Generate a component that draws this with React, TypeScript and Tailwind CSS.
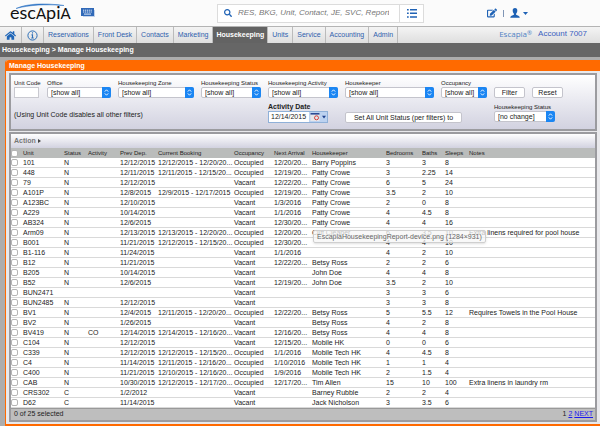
import type { ReactNode } from "react";
import clsx from "clsx";
import { FaEdit, FaHome, FaSearch } from "react-icons/fa";

type Row = {
  unit: string;
  status?: string;
  activity?: string;
  prev?: string;
  booking?: string;
  occupancy: string;
  next?: string;
  keeper?: string;
  beds: string;
  baths: string;
  sleeps: string;
  notes?: string;
};

const tabs = [
  "Reservations",
  "Front Desk",
  "Contacts",
  "Marketing",
  "Housekeeping",
  "Units",
  "Service",
  "Accounting",
  "Admin",
];

const columns = [
  { label: "Unit", width: "w-[41px]" },
  { label: "Status", width: "w-[24px]" },
  { label: "Activity", width: "w-[32px]" },
  { label: "Prev Dep.", width: "w-[38px]" },
  { label: "Current Booking", width: "w-[76px]" },
  { label: "Occupancy", width: "w-[40px]" },
  { label: "Next Arrival", width: "w-[38px]" },
  { label: "Housekeeper", width: "w-[74px]" },
  { label: "Bedrooms", width: "w-[36px]" },
  { label: "Baths", width: "w-[23px]" },
  { label: "Sleeps", width: "w-[24px]" },
  { label: "Notes", width: "" },
];

const rows: Row[] = [
  { unit: "101", status: "N", prev: "12/12/2015", booking: "12/12/2015 - 12/20/20...", occupancy: "Occupied", next: "12/20/20...", keeper: "Barry Poppins", beds: "3", baths: "3", sleeps: "8" },
  { unit: "448", status: "N", prev: "12/11/2015", booking: "12/11/2015 - 12/15/20...", occupancy: "Occupied", next: "12/19/20...", keeper: "Patty Crowe", beds: "3", baths: "2.25", sleeps: "14" },
  { unit: "79", status: "N", prev: "12/12/2015", occupancy: "Vacant", next: "12/22/20...", keeper: "Patty Crowe", beds: "6", baths: "5", sleeps: "24" },
  { unit: "A101P", status: "N", prev: "12/8/2015", booking: "12/9/2015 - 12/17/2015", occupancy: "Occupied", next: "12/19/20...", keeper: "Patty Crowe", beds: "3.5", baths: "2", sleeps: "10" },
  { unit: "A123BC", status: "N", prev: "12/10/2015", occupancy: "Vacant", next: "1/3/2016", keeper: "Patty Crowe", beds: "2", baths: "0", sleeps: "8" },
  { unit: "A229", status: "N", prev: "10/14/2015", occupancy: "Vacant", next: "1/1/2016", keeper: "Patty Crowe", beds: "4", baths: "4.5", sleeps: "8" },
  { unit: "AB324", status: "N", prev: "12/6/2015", occupancy: "Vacant", next: "12/30/20...", keeper: "Patty Crowe", beds: "4", baths: "4", sleeps: "16" },
  { unit: "Arm09", status: "N", prev: "12/13/2015", booking: "12/13/2015 - 12/20/20...", occupancy: "Occupied", next: "12/20/20...", keeper: "Cliff Cleaner", beds: "6", baths: "3.5", sleeps: "10", notes: "Extra linens required for pool house" },
  { unit: "B001", status: "N", prev: "11/21/2015", booking: "12/12/2015 - 12/15/20...", occupancy: "Occupied", next: "12/30/20...", beds: "4", baths: "4", sleeps: "10" },
  { unit: "B1-116", status: "N", prev: "11/24/2015", occupancy: "Vacant", next: "1/1/2016", beds: "4", baths: "2", sleeps: "10" },
  { unit: "B12", status: "N", prev: "11/21/2015", occupancy: "Vacant", next: "12/22/20...", keeper: "Betsy Ross", beds: "2", baths: "2", sleeps: "6" },
  { unit: "B205", status: "N", prev: "10/14/2015", occupancy: "Vacant", keeper: "John Doe", beds: "4", baths: "4", sleeps: "8" },
  { unit: "B52", status: "N", prev: "12/6/2015", occupancy: "Vacant", next: "12/19/20...", keeper: "John Doe", beds: "3.5", baths: "2", sleeps: "10" },
  { unit: "BUN2471", occupancy: "Vacant", beds: "3", baths: "3", sleeps: "6" },
  { unit: "BUN2485", status: "N", prev: "12/12/2015", occupancy: "Vacant", beds: "3", baths: "3", sleeps: "8" },
  { unit: "BV1", status: "N", prev: "12/4/2015", booking: "12/11/2015 - 12/20/20...", occupancy: "Occupied", next: "12/22/20...", keeper: "Betsy Ross", beds: "5", baths: "5.5", sleeps: "12", notes: "Requires Towels in the Pool House" },
  { unit: "BV2", status: "N", prev: "1/26/2015", occupancy: "Vacant", keeper: "Betsy Ross", beds: "4", baths: "2", sleeps: "8" },
  { unit: "BV419", status: "N", activity: "CO", prev: "12/14/2015", booking: "12/14/2015 - 12/16/20...", occupancy: "Vacant", next: "12/16/20...", keeper: "Betsy Ross", beds: "4", baths: "4", sleeps: "8" },
  { unit: "C104", status: "N", prev: "12/12/2015", occupancy: "Vacant", next: "12/15/20...", keeper: "Mobile HK", beds: "0", baths: "0", sleeps: "6" },
  { unit: "C339", status: "N", prev: "12/12/2015", booking: "12/12/2015 - 12/15/20...", occupancy: "Occupied", next: "1/1/2016", keeper: "Mobile Tech HK", beds: "4", baths: "4.5", sleeps: "8" },
  { unit: "C4", status: "N", prev: "11/14/2015", booking: "12/11/2015 - 12/16/20...", occupancy: "Occupied", next: "1/10/2016", keeper: "Mobile Tech HK", beds: "1", baths: "1", sleeps: "4" },
  { unit: "C400", status: "N", prev: "11/21/2015", booking: "12/10/2015 - 12/16/20...", occupancy: "Occupied", next: "1/9/2016", keeper: "Mobile Tech HK", beds: "2", baths: "1.5", sleeps: "4" },
  { unit: "CAB", status: "N", prev: "10/30/2015", booking: "12/12/2015 - 12/17/20...", occupancy: "Occupied", next: "12/17/20...", keeper: "Tim Allen", beds: "15", baths: "10", sleeps: "100", notes: "Extra linens in laundry rm" },
  { unit: "CRS302", status: "C", prev: "1/2/2012", occupancy: "Vacant", keeper: "Barney Rubble", beds: "2", baths: "2", sleeps: "4" },
  { unit: "D62", status: "C", prev: "11/14/2015", occupancy: "Vacant", keeper: "Jack Nicholson", beds: "3", baths: "3.5", sleeps: "6" },
];

function Logo() {
  return (
    <a href="#" className="relative flex h-[22px] w-[60px] items-baseline font-['Lato',sans-serif] text-[18px] leading-[20px] text-[#111]">
      esc<span className="text-[15px]">A</span>pi<span className="text-[15px]">A</span>
      <svg viewBox="0 0 60 22" className="pointer-events-none absolute inset-0 h-full w-full" aria-hidden>
        <path d="M6 6.5C16 2 32 .5 54 3.5C34 2 20 3 6 6.5Z" fill="#2f74c5" stroke="#2f74c5" strokeWidth=".5" />
      </svg>
    </a>
  );
}

function KeyboardIcon() {
  return (
    <svg viewBox="0 0 15 10" className="h-[10px] w-[15px]" aria-hidden>
      <path d="M2 2h12v7H2z" fill="#c3d3ea" />
      <path d="M0 0h13v8H0z" fill="#3069b8" />
      <path d="M2 2.2h9M2 4h9" stroke="#dfe9f6" strokeWidth="1" strokeDasharray="1.2 .7" />
      <path d="M3 6.1h7" stroke="#dfe9f6" strokeWidth="1" />
    </svg>
  );
}

function InfoIcon() {
  return (
    <svg viewBox="0 0 11 11" className="h-[11px] w-[11px]" fill="none" stroke="#2d6fb8" aria-hidden>
      <circle cx="5.5" cy="5.5" r="4.6" strokeWidth="1" />
      <path d="M5.5 2.3v1.3M4.5 4.9h1v3M4.3 8h2.4" strokeWidth="1.1" />
    </svg>
  );
}

function ListIcon() {
  return (
    <svg viewBox="0 0 10 9" className="h-[9px] w-[10px]" fill="#1f62b5" aria-hidden>
      <path d="M0 0h1.7v1.5H0zM3 0h7v1.5H3zM0 3.6h1.7v1.5H0zM3 3.6h7v1.5H3zM0 7.2h1.7v1.5H0zM3 7.2h7v1.5H3z" />
    </svg>
  );
}

function UserIcon() {
  return (
    <svg viewBox="0 0 10 10" className="h-[10px] w-[10px]" fill="#1f62b5" aria-hidden>
      <path d="M5 0C3.4 0 2.6 1.1 2.7 2.7C2.8 4.2 3.3 5 3.9 5.6V6.8C2.6 7.5 0.3 7.8 0.2 9.7H9.8C9.7 7.8 7.4 7.5 6.1 6.8V5.6C6.7 5 7.2 4.2 7.3 2.7C7.4 1.1 6.6 0 5 0Z" />
    </svg>
  );
}

function Field({ id, label, children, className }: { id: string; label: string; children: ReactNode; className?: string }) {
  return (
    <div className={clsx("flex flex-col", className)}>
      <label htmlFor={id} className="h-[8px] text-[6px] leading-[8px] whitespace-nowrap">
        {label}
      </label>
      {children}
    </div>
  );
}

function Select({ id, value = "[show all]", className }: { id: string; value?: string; className?: string }) {
  return (
    <div className={clsx("relative h-[11px]", className)}>
      <select
        id={id}
        className="block h-full w-full appearance-none rounded-[2px] border border-[#c4c4cc] bg-white pl-[3px] text-[7px] leading-[9px] text-[#222]"
      >
        <option>{value}</option>
      </select>
      <svg viewBox="0 0 9 11" className="pointer-events-none absolute top-0 right-0 h-[11px] w-[9px]" aria-hidden>
        <path d="M0 0h7a2 2 0 0 1 2 2v7a2 2 0 0 1-2 2H0z" fill="#1b86f3" />
        <path d="M2.8 4.6 4.5 2.8l1.7 1.8M2.8 6.4l1.7 1.8 1.7-1.8" fill="none" stroke="#fff" strokeWidth=".9" />
      </svg>
    </div>
  );
}

function Button({ children, className }: { children: ReactNode; className?: string }) {
  return (
    <button
      type="button"
      className={clsx("h-[11px] rounded-[2px] border border-[#c4c4cc] bg-white text-center text-[7px] leading-[9px] text-[#222]", className)}
    >
      {children}
    </button>
  );
}

function Checkbox({ label }: { label: string }) {
  return (
    <input
      type="checkbox"
      aria-label={label}
      className="mx-auto block h-[7px] w-[7px] appearance-none rounded-[2px] border border-[#b5b5b5] bg-white"
    />
  );
}

function TopBar() {
  return (
    <header className="flex h-[26px] items-center bg-[#fbfbfb] pr-[72px] pl-[10px]">
      <Logo />
      <button type="button" aria-label="Keyboard" className="ml-[11px]">
        <KeyboardIcon />
      </button>
      <div className="ml-[121px] flex h-[19px] w-[207px] items-center border border-[#dcdcdc] bg-white">
        <FaSearch className="ml-[6px] h-[8px] w-[8px] shrink-0 text-[#1f62b5]" />
        <input
          type="search"
          aria-label="Search"
          placeholder="RES, BKG, Unit, Contact, JE, SVC, Report"
          className="ml-[6px] min-w-0 flex-1 text-[8px] leading-[10px] italic outline-none placeholder:text-[#777]"
        />
        <button type="button" aria-label="List" className="flex h-full w-[24px] items-center justify-center border-l border-[#dcdcdc]">
          <ListIcon />
        </button>
      </div>
      <div className="ml-auto flex items-center gap-[6px] text-[#1f62b5]">
        <button type="button" aria-label="Edit">
          <FaEdit className="h-[10px] w-[10px]" />
        </button>
        <span className="h-[7px] w-px bg-[#7f95b5]" />
        <button type="button" aria-label="Account menu" className="flex items-center gap-[3px]">
          <UserIcon />
          <svg viewBox="0 0 5 3" className="h-[3px] w-[5px]" fill="#1f62b5" aria-hidden>
            <path d="M0 0h5L2.5 3z" />
          </svg>
        </button>
      </div>
    </header>
  );
}

function NavBar() {
  return (
    <nav className="flex h-[17px] items-stretch border-t border-[#b4b4b4] bg-linear-to-b from-[#f4f4f4] to-[#dedede] text-[7px] text-[#2f5fae]">
      <a href="#" aria-label="Home" className="flex w-[22px] items-center justify-center border-r border-[#bbb]">
        <FaHome className="h-[11px] w-[11px] text-[#1f66b8]" />
      </a>
      <a href="#" aria-label="Info" className="flex w-[22px] items-center justify-center border-r border-[#bbb]">
        <InfoIcon />
      </a>
      {tabs.map((tab) => (
        <a
          key={tab}
          href="#"
          className={clsx(
            "flex items-center border-r border-[#bbb]",
            tab === "Housekeeping" ? "bg-[#636363] px-[3px] font-bold text-white" : "px-1",
          )}
        >
          {tab}
        </a>
      ))}
      <div className="ml-auto flex items-center gap-[6px] pr-[13px] pb-[2px] text-[8px] leading-[10px] text-[#3a5fc0]">
        <span className="flex font-['Open_Sans',sans-serif] text-[#4f82c4]">
          Escapia<span className="text-[6px] leading-[8px]">®</span>
        </span>
        <span>Account 7007</span>
      </div>
    </nav>
  );
}

function Filters() {
  return (
    <form className="grid grid-cols-[26px_64px_76px_60px_70px_89px_46px_31px_31px] gap-x-[7px] gap-y-[5px] border-2 border-[#9b9b9f] bg-linear-to-b from-white to-[#d2d2e0] px-[3px] pt-[4px] pb-[6px]">
      <Field id="unit-code" label="Unit Code">
        <input id="unit-code" type="text" className="h-[11px] w-[25px] border border-[#c9c9d0] bg-white px-[2px] text-[7px]" />
      </Field>
      <Field id="office" label="Office">
        <Select id="office" />
      </Field>
      <Field id="zone" label="Housekeeping Zone">
        <Select id="zone" />
      </Field>
      <Field id="hk-status" label="Housekeeping Status">
        <Select id="hk-status" />
      </Field>
      <Field id="hk-activity" label="Housekeeping Activity">
        <Select id="hk-activity" />
      </Field>
      <Field id="keeper" label="Housekeeper">
        <Select id="keeper" />
      </Field>
      <Field id="occupancy" label="Occupancy">
        <Select id="occupancy" />
      </Field>
      <Button className="self-end">Filter</Button>
      <Button className="self-end">Reset</Button>

      <p className="col-span-4 self-center pt-[3px] text-[7px] leading-[10px]">(Using Unit Code disables all other filters)</p>
      <div className="flex flex-col">
        <label htmlFor="activity-date" className="h-[8px] text-[7px] leading-[8px] font-bold whitespace-nowrap">
          Activity Date
        </label>
        <div className="flex h-[12px] w-[60px] border border-[#8fb0d8] bg-[#bcd2f0]">
          <input id="activity-date" type="text" defaultValue="12/14/2015" className="w-[40px] bg-white pl-[2px] text-[7px] leading-[10px]" />
          <button type="button" aria-label="Pick a date" className="flex flex-1 items-center justify-center">
            <svg viewBox="0 0 18 10" className="h-[10px] w-[18px]" aria-hidden>
              <path d="M1.5 1h9v8h-9z" fill="#e6e6ea" />
              <path d="M1.5 1h9v1.6h-9z" fill="#2c4a94" />
              <circle cx="7.5" cy="5.8" r="2" fill="none" stroke="#d2403c" strokeWidth="1" />
              <path d="M13 3.8h4L15 6.6z" fill="#1c3f8c" />
            </svg>
          </button>
        </div>
      </div>
      <Button className="col-span-2 w-[117px] self-end">Set All Unit Status (per filters) to</Button>
      <Field id="set-status" label="Housekeeping Status" className="col-span-2">
        <Select id="set-status" value="[no change]" className="w-[61px]" />
      </Field>
    </form>
  );
}

function UnitTable() {
  return (
    <table className="w-full table-fixed border-separate border-spacing-0 text-left">
      <thead className="bg-[#babcbb] text-[6px] leading-[9px] text-[#222]">
        <tr>
          <th className="h-[10px] w-[12px] p-0">
            <div className="w-[7px]">
              <Checkbox label="Select all units" />
            </div>
          </th>
          {columns.map((col) => (
            <th key={col.label} className={clsx("h-[10px] p-0 font-normal whitespace-nowrap", col.width)}>
              {col.label}
            </th>
          ))}
        </tr>
      </thead>
      <tbody className="bg-white text-[7px] leading-[9px] whitespace-nowrap text-[#222] [&_td]:h-[10px] [&_td]:border-b [&_td]:border-[#d9d9d9] [&_td]:p-0">
        {rows.map((row) => (
          <tr key={row.unit}>
            <td>
              <div className="w-[7px]">
                <Checkbox label={`Select ${row.unit}`} />
              </div>
            </td>
            <td>{row.unit}</td>
            <td>{row.status}</td>
            <td>{row.activity}</td>
            <td>{row.prev}</td>
            <td>{row.booking}</td>
            <td>{row.occupancy}</td>
            <td>{row.next}</td>
            <td>{row.keeper}</td>
            <td>{row.beds}</td>
            <td>{row.baths}</td>
            <td>{row.sleeps}</td>
            <td>{row.notes}</td>
          </tr>
        ))}
      </tbody>
    </table>
  );
}

export default function App() {
  return (
    <div className="min-h-screen bg-[#adadad] font-['Liberation_Sans',sans-serif] text-[#222]">
      <TopBar />
      <NavBar />
      <div className="h-[14px] bg-[#666] pl-[2px] text-[7px] leading-[13px] font-bold text-white">
        Housekeeping &gt; Manage Housekeeping
      </div>
      <main className="mt-[3px] ml-[5px] rounded-tl-[3px] border-b-2 border-l border-[#ff6a00] bg-[#e9e9ec]">
        <h1 className="h-[11px] rounded-tl-[3px] bg-[#ff6a00] pl-[3px] text-[7px] leading-[11px] font-bold text-white">
          Manage Housekeeping
        </h1>
        <div className="flex flex-col gap-px py-[2px] pr-[3px] pl-[3px]">
          <Filters />
          <section className="relative border-2 border-[#9b9b9f]">
            <button
              type="button"
              className="flex h-[14px] w-full items-center gap-[2px] bg-linear-to-b from-white to-[#d2d2e0] pl-[3px] text-[7px] font-bold text-[#777]"
            >
              Action
              <svg viewBox="0 0 3 4" className="h-[4px] w-[3px]" fill="#444" aria-hidden>
                <path d="M0 0l3 2-3 2z" />
              </svg>
            </button>
            <UnitTable />
            <div
              role="tooltip"
              className="absolute top-[96px] left-[302px] rounded-[2px] border border-[#cfcfcf] bg-[#f5f5f5]/75 px-[3px] text-[7px] leading-[11px] whitespace-nowrap text-[#666] shadow-sm"
            >
              EscapiaHousekeepingReport-device.png (1284×931)
            </div>
            <footer className="flex h-[12px] items-center justify-between border-t border-[#999] bg-[#bebebe] pr-[2px] pl-[3px] text-[7px]">
              <span>0 of 25 selected</span>
              <span className="flex gap-[2px]">
                <span>1</span>
                <a href="#" className="text-[#1a1aee] underline">2</a>
                <a href="#" className="text-[#1a1aee] underline">NEXT</a>
              </span>
            </footer>
          </section>
        </div>
      </main>
    </div>
  );
}
